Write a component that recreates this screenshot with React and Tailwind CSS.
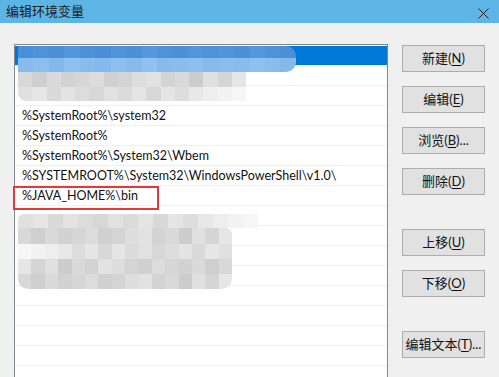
const rows = [
  '',
  '',
  '',
  '%SystemRoot%\\system32',
  '%SystemRoot%',
  '%SystemRoot%\\System32\\Wbem',
  '%SYSTEMROOT%\\System32\\WindowsPowerShell\\v1.0\\',
  '%JAVA_HOME%\\bin',
  '', '', '', '', '', '', '', '', '',
];

const buttons = [
  { label: '新建', key: 'N', mt: 'mt-[1px]' },
  { label: '编辑', key: 'E', mt: 'mt-[14px]' },
  { label: '浏览', key: 'B', tail: '...', mt: 'mt-[14px]' },
  { label: '删除', key: 'D', mt: 'mt-[14px]' },
  { label: '上移', key: 'U', mt: 'mt-[34px]' },
  { label: '下移', key: 'O', mt: 'mt-[14px]' },
  { label: '编辑文本', key: 'T', tail: '...', mt: 'mt-[34px]' },
];

// mosaic colours for the blurred-out entries
const blueTop = ['#4a90d8', '#4f93da', '#4b8fd6', '#5296dc', '#4d91d9', '#4a8ed7', '#5094da', '#4c90d8', '#5598dd', '#4e92d9', '#4b8fd7', '#5195db', '#4e92d9', '#5094da', '#4c90d8', '#5397dc', '#4e92d9', '#4b8fd7'];
const blueLow = ['#86bbec', '#8dbfee', '#83b8ea', '#8fc1ee', '#88bced', '#84b9eb', '#8cbfee', '#87bbec', '#91c2ef', '#85baeb', '#8abdec', '#8ec0ee', '#86baeb', '#8bbeed', '#88bcec', '#8fc1ee', '#8abdec', '#84b9ea'];
const grayA = ['#d8d8d8', '#cfcfcf', '#dadada', '#d2d2d2', '#d6d6d6', '#dcdcdc', '#d0d0d0', '#d4d4d4', '#dddddd', '#e2e2e2', '#d3d3d3', '#d9d9d9', '#cdcdcd', '#e0e0e0', '#d5d5d5', '#e6e6e6'];
const grayB = ['#e0e0e0', '#e6e6e6', '#d9d9d9', '#e3e3e3', '#dcdcdc', '#d7d7d7', '#e1e1e1', '#dbdbdb', '#e4e4e4', '#d8d8d8', '#e5e5e5', '#dddddd', '#e8e8e8', '#eeeeee', '#f2f2f2', '#f6f6f6'];

function Strip({ colors, w, h }) {
  return (
    <div className="flex" style={{ height: h }}>
      {colors.map((c, i) => (
        <div key={i} style={{ width: w, background: c }} />
      ))}
    </div>
  );
}

function Button({ label, k, tail, mt }) {
  return (
    <div className={`${mt} w-[83px] h-[27px] bg-[#e1e1e1] border border-[#adadad] flex items-center justify-center text-[13px] text-[#111]`}>
      <span>
        {label}(<span className="underline underline-offset-2">{k}</span>){tail}
      </span>
    </div>
  );
}

export default function App() {
  return (
    <div
      className="w-[499px] h-[377px] bg-[#f0f0f0] overflow-hidden flex flex-col"
      style={{ fontFamily: 'Lato, "Noto Sans CJK SC", sans-serif' }}
    >
      <div className="h-[23px] bg-[#5db5e6] flex items-center justify-between pl-[6px] pr-[10px] shrink-0">
        <span className="text-[13px] text-[#1a1a1a] leading-none">编辑环境变量</span>
        <svg width="11" height="11" viewBox="0 0 11 11" className="mt-[3px]">
          <path d="M0.5 0.5 L10.5 10.5 M10.5 0.5 L0.5 10.5" stroke="#222" strokeWidth="1" />
        </svg>
      </div>

      <div className="flex flex-1 pl-[14px] pt-[21px]">
        <div className="relative w-[374px] h-[400px] bg-white border border-[#828790] pt-[1px]">
          {rows.map((t, i) => (
            <div
              key={i}
              className={`h-[20px] flex items-center pl-[7px] pt-[1px] border-b border-[#f0f0f0] text-[12.5px] text-[#111] whitespace-nowrap ${i === 0 ? 'bg-[#0078d7] border-[#0078d7]' : ''}`}
            >
              {t}
            </div>
          ))}

          {/* blurred entries */}
          <div className="absolute left-[3px] top-[1px] blur-[0.6px] rounded-bl-[8px] overflow-hidden">
            <div className="rounded-tr-[10px] rounded-br-[10px] overflow-hidden w-[278px]">
              <Strip colors={blueTop} w={16} h={12} />
              <Strip colors={blueLow} w={16} h={14} />
            </div>
            <div className="w-[228px] overflow-hidden rounded-bl-[8px]">
              <Strip colors={grayA} w={15} h={15} />
              <Strip colors={grayB} w={15} h={14} />
            </div>
          </div>

          <div className="absolute left-[3px] top-[169px] blur-[0.6px]">
            <div className="w-[244px] overflow-hidden rounded-tl-[6px]">
              <Strip colors={grayB} w={15} h={14} />
            </div>
            <div className="w-[214px] overflow-hidden rounded-b-[10px] rounded-tr-[6px]">
              <Strip colors={grayA} w={15} h={16} />
              <Strip colors={grayB.slice().reverse()} w={15} h={15} />
              <Strip colors={grayA.slice().reverse()} w={15} h={15} />
              <Strip colors={grayA} w={15} h={15} />
            </div>
          </div>

          <div className="absolute left-[-2px] top-[141px] w-[146px] h-[24px] border-2 border-[#e0393e]" />
        </div>

        <div className="ml-[14px] flex flex-col">
          {buttons.map((b) => (
            <Button key={b.key} label={b.label} k={b.key} tail={b.tail} mt={b.mt} />
          ))}
        </div>
      </div>
    </div>
  );
}
